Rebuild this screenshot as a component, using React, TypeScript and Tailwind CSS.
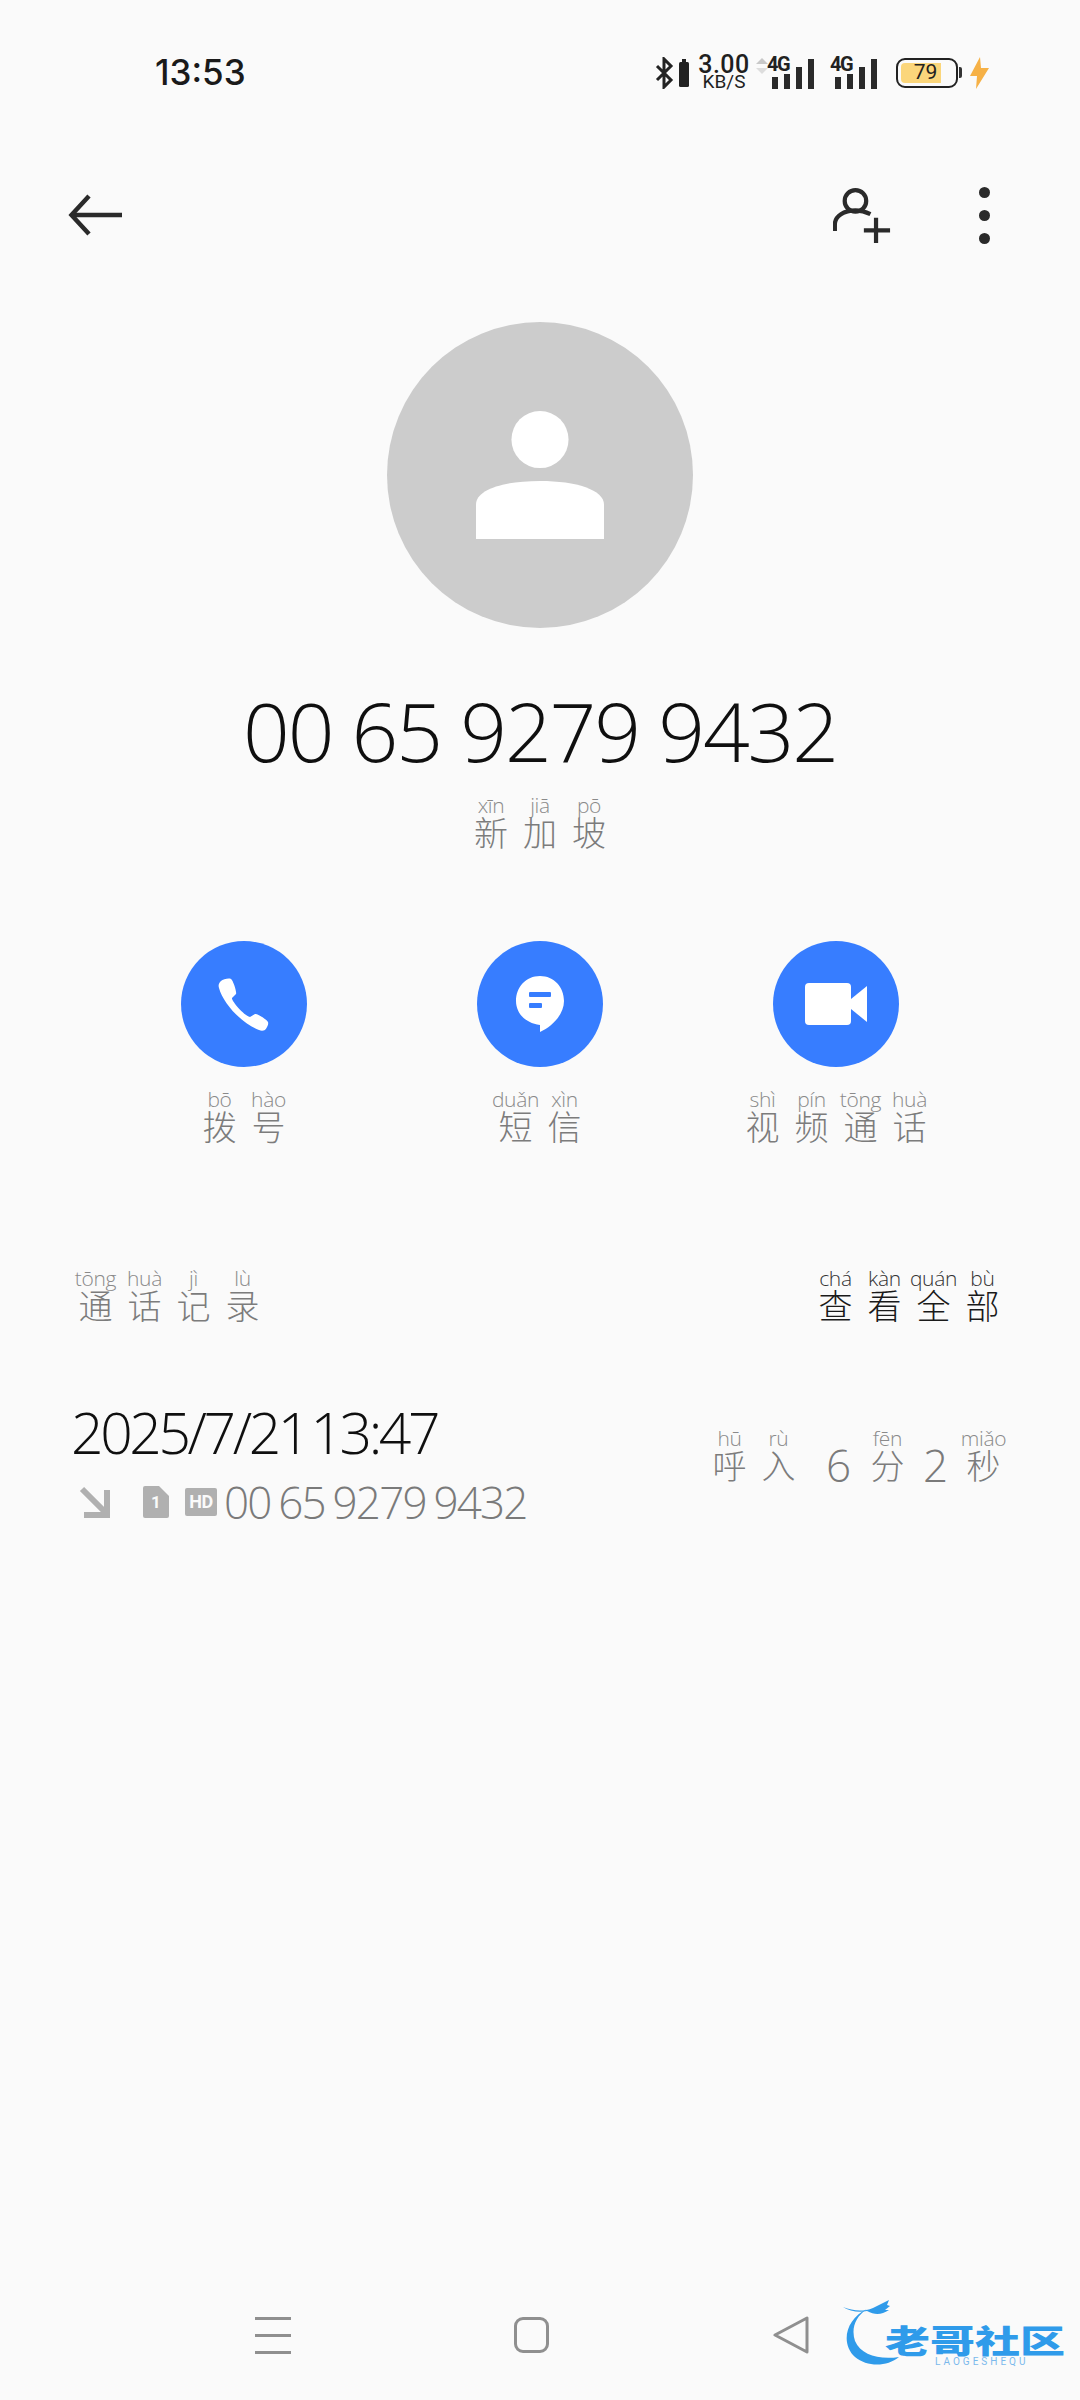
const FONT = "font-['Open_Sans','Noto_Sans_CJK_SC',sans-serif]";

function R({ p, c, dark }: { p: string; c: string; dark?: boolean }) {
  return (
    <span className="flex w-[49px] flex-col items-center">
      <span className={`whitespace-nowrap text-[21px] leading-[21px] font-light tracking-[-0.3px] ${dark ? "text-[#333333]" : "text-[#8a8a8a]"}`}>{p}</span>
      <span className={`mt-[1px] whitespace-nowrap text-[34px] leading-[30px] font-['Noto_Sans_CJK_SC',sans-serif] font-light ${dark ? "text-[#1a1a1a]" : "text-[#7c7c7c]"}`}>{c}</span>
    </span>
  );
}

function Signal() {
  return (
    <div className="relative flex h-[32px] w-[44px] items-end gap-[6px] pl-[2px]">
      <span className="h-[12px] w-[6px] bg-[#2a2a2a]" />
      <span className="h-[15px] w-[6px] bg-[#2a2a2a]" />
      <span className="h-[22px] w-[6px] bg-[#2a2a2a]" />
      <span className="h-[30px] w-[6px] bg-[#2a2a2a]" />
      <span className="absolute left-[-3px] top-[-3px] font-['Roboto',sans-serif] text-[20px] leading-[20px] font-bold tracking-[-1.5px] text-[#222222]">4G</span>
    </div>
  );
}

function Action({ children, labels }: { children: React.ReactNode; labels: [string, string][] }) {
  return (
    <div className="flex w-[296px] flex-col items-center">
      <div className="flex h-[126px] w-[126px] items-center justify-center rounded-full bg-[#377dff]">{children}</div>
      <div className="mt-[22px] flex justify-center">
        {labels.map(([p, c]) => (
          <R key={c} p={p} c={c} />
        ))}
      </div>
    </div>
  );
}

export default function App() {
  return (
    <div className={`flex h-[2400px] w-[1080px] flex-col overflow-hidden bg-[#fafafa] ${FONT}`}>
      {/* status bar */}
      <div className="flex h-[144px] items-start justify-between pl-[155px] pr-[90px] pt-[55px]">
        <span className="font-['Inter',sans-serif] text-[35px] leading-[34px] font-medium text-[#1a1a1a]">13:53</span>
        <div className="flex items-center">
          <svg width="36" height="32" viewBox="0 0 36 32" fill="none">
            <path d="M2 9l14 14-7 7V2l7 7L2 23" stroke="#222" strokeWidth="3" />
            <rect x="24" y="5" width="10" height="25" rx="1.5" fill="#222" />
            <rect x="27" y="2" width="4" height="4" fill="#222" />
          </svg>
          <div className="ml-[6px] flex w-[54px] flex-col items-center font-['Roboto',sans-serif] text-[#1f1f1f]">
            <span className="text-[25px] leading-[19px] font-medium tracking-[0.5px]">3.00</span>
            <span className="text-[19px] leading-[16px] font-normal">KB/S</span>
          </div>
          <svg className="ml-[5px] mt-[3px] self-start" width="12" height="16" viewBox="0 0 12 16">
            <path d="M6 0l6 6H0z" fill="#c8c8c8" />
            <path d="M6 16l6-6H0z" fill="#dddddd" />
          </svg>
          <div className="ml-[2px]">
            <Signal />
          </div>
          <div className="ml-[19px]">
            <Signal />
          </div>
          <div className="relative ml-[19px] flex h-[30px] w-[62px] items-center rounded-[9px] border-[2.5px] border-[#222222] p-[3px]">
            <div className="h-full w-[76%] rounded-l-[4px] bg-[#fbd67b]" />
            <span className="absolute inset-0 flex items-center justify-center pr-[3px] font-['Roboto',sans-serif] text-[21px] leading-none font-normal text-[#222222]">79</span>
          </div>
          <span className="ml-[1px] h-[11px] w-[3px] rounded-r-[2px] bg-[#333333]" />
          <svg className="ml-[7px]" width="21" height="32" viewBox="0 0 21 32">
            <path d="M11 0L1 19h7l-1 13L20 11h-8z" fill="#f6b146" />
          </svg>
        </div>
      </div>

      {/* toolbar */}
      <div className="mt-[44px] flex h-[54px] items-center justify-between pl-[68px] pr-[90px]">
        <svg width="56" height="44" viewBox="0 0 56 44" fill="none" stroke="#2a2a2a" strokeWidth="4.5">
          <path d="M54 22H4" />
          <path d="M21 3L3.5 22 21 41" />
        </svg>
        <div className="flex items-center gap-[88px]">
          <svg width="58" height="58" viewBox="0 0 62 60" fill="none" stroke="#2a2a2a" strokeWidth="4.5">
            <circle cx="24" cy="15" r="11.5" />
            <path d="M2 47V40C2 31 12 25 24 25c6 0 12 2 16 4" />
            <path d="M46 33v27M33 46.5h28" />
          </svg>
          <div className="flex flex-col gap-[12px]">
            <span className="h-[11px] w-[11px] rounded-full bg-[#2a2a2a]" />
            <span className="h-[11px] w-[11px] rounded-full bg-[#2a2a2a]" />
            <span className="h-[11px] w-[11px] rounded-full bg-[#2a2a2a]" />
          </div>
        </div>
      </div>

      {/* avatar */}
      <div className="mt-[80px] flex justify-center">
        <div className="flex h-[306px] w-[306px] items-center justify-center rounded-full bg-[#cccccc]">
          <svg width="128" height="130" viewBox="0 0 130 130" fill="#ffffff">
            <circle cx="65" cy="29" r="29" />
            <path d="M0 130V95C0 80 28 71 65 71s65 9 65 24v35z" />
          </svg>
        </div>
      </div>

      {/* number */}
      <div className="mt-[47px] text-center text-[82px] leading-[110px] font-light tracking-[-2.1px] text-[#0f0f0f]">00 65 9279 9432</div>
      <div className="mt-[10px] flex justify-center">
        <R p="xīn" c="新" />
        <R p="jiā" c="加" />
        <R p="pō" c="坡" />
      </div>

      {/* actions */}
      <div className="mt-[94px] flex justify-center">
        <Action labels={[["bō", "拨"], ["hào", "号"]]}>
          <svg width="56" height="56" viewBox="0 0 56 56" fill="#ffffff">
            <path d="M5 5c2-2 8-3 10-2 2 1 6 13 5 15l-4 4c-1 2 11 17 18 19l5-3c2-1 12 6 13 8 1 3-2 7-3 8-2 1-4 1-6 0C25 47 7 27 3 12c-1-3 0-5 2-7z" />
          </svg>
        </Action>
        <Action labels={[["duǎn", "短"], ["xìn", "信"]]}>
          <svg width="50" height="56" viewBox="0 0 50 56">
            <path d="M25 0C11 0 1 11 1 25c0 12 9 22 24 24v7c13-6 24-18 24-31C49 11 39 0 25 0z" fill="#ffffff" />
            <rect x="14" y="16" width="22" height="5" rx="1" fill="#377dff" />
            <rect x="14" y="27" width="13" height="5" rx="1" fill="#377dff" />
          </svg>
        </Action>
        <Action labels={[["shì", "视"], ["pín", "频"], ["tōng", "通"], ["huà", "话"]]}>
          <svg width="62" height="42" viewBox="0 0 62 42" fill="#ffffff">
            <rect x="0" y="0" width="46" height="42" rx="4" />
            <path d="M46 16L62 3v36L46 26z" />
          </svg>
        </Action>
      </div>

      {/* header row */}
      <div className="mt-[127px] flex items-center justify-between pl-[71px] pr-[73px]">
        <div className="flex">
          <R p="tōng" c="通" />
          <R p="huà" c="话" />
          <R p="jì" c="记" />
          <R p="lù" c="录" />
        </div>
        <div className="flex">
          <R dark p="chá" c="查" />
          <R dark p="kàn" c="看" />
          <R dark p="quán" c="全" />
          <R dark p="bù" c="部" />
        </div>
      </div>

      {/* call row */}
      <div className="mt-[80px] flex justify-between pl-[71px] pr-[72px]">
        <div className="flex flex-col">
          <div className="text-[57px] leading-[64px] font-light tracking-[-3.4px] [word-spacing:-8px] text-[#0f0f0f]">2025/7/21 13:47</div>
          <div className="mt-[12px] flex items-center">
            <svg className="ml-[8px]" width="32" height="32" viewBox="0 0 32 32" fill="none" stroke="#b0b0b0" strokeWidth="6">
              <path d="M3 3l25 25" />
              <path d="M28 4v25H5" />
            </svg>
            <svg className="ml-[32px]" width="26" height="32" viewBox="0 0 26 32">
              <path d="M2 0h14l10 10v20a2 2 0 01-2 2H2a2 2 0 01-2-2V2a2 2 0 012-2z" fill="#b0b0b0" />
            </svg>
            <span className="ml-[-18px] w-[10px] text-center font-['Roboto',sans-serif] text-[17px] leading-none font-bold text-[#fafafa]">1</span>
            <span className="ml-[24px] flex h-[28px] w-[32px] items-center justify-center rounded-[2px] bg-[#b0b0b0] font-['Roboto',sans-serif] text-[18px] leading-none font-bold tracking-[-0.5px] text-[#fafafa]">HD</span>
            <span className="ml-[7px] text-[44px] leading-[52px] font-light tracking-[-1.8px] [word-spacing:-2px] text-[#7a7a7a]">00 65 9279 9432</span>
          </div>
        </div>
        <div className="mt-[28px] flex items-end self-start">
          <R p="hū" c="呼" />
          <R p="rù" c="入" />
          <span className="ml-[11px] w-[49px] text-center text-[44px] leading-[30px] font-light text-[#7a7a7a]">6</span>
          <R p="fēn" c="分" />
          <span className="w-[47px] text-center text-[44px] leading-[30px] font-light text-[#7a7a7a]">2</span>
          <R p="miǎo" c="秒" />
        </div>
      </div>

      {/* nav bar */}
      <div className="mt-auto mb-[31px] flex items-center pl-[255px]">
        <div className="flex w-[36px] flex-col gap-[14px]">
          <span className="h-[3px] bg-[#8f8f8f]" />
          <span className="h-[3px] bg-[#8f8f8f]" />
          <span className="h-[3px] bg-[#8f8f8f]" />
        </div>
        <div className="ml-[223px] h-[36px] w-[35px] rounded-[9px] border-[3px] border-[#8f8f8f]" />
        <svg className="ml-[224px]" width="36" height="38" viewBox="0 0 36 38" fill="none" stroke="#8f8f8f" strokeWidth="3" strokeLinejoin="round">
          <path d="M34 2v34L2 19z" />
        </svg>
        <div className="relative ml-[34px] h-[68px] w-[226px]">
          <svg className="absolute left-0 top-[-4px]" width="100" height="72" viewBox="0 0 100 72" fill="none">
            <path d="M24 12C3 22-3 46 12 60c12 10 32 10 44 0C36 63 18 58 12 44 8 32 12 20 24 12z" fill="#2f9bea" />
            <path d="M0 10c10 4 20 5 30 1l16-8-2 5 3 1-5 4 4 0c-8 5-14 5-22 1-8 2-18 0-24-4z" fill="#2f9bea" />
          </svg>
          <div className="absolute left-[42px] top-[18px] origin-left scale-y-[0.72] font-['Noto_Sans_CJK_SC',sans-serif] text-[45px] leading-[40px] font-black whitespace-nowrap text-[#2f9bea]">老哥社区</div>
          <div className="absolute left-[92px] top-[56px] font-['Roboto',sans-serif] text-[10px] leading-[10px] tracking-[3px] whitespace-nowrap text-[#7ab9ec]">LAOGESHEQU</div>
        </div>
      </div>
    </div>
  );
}
